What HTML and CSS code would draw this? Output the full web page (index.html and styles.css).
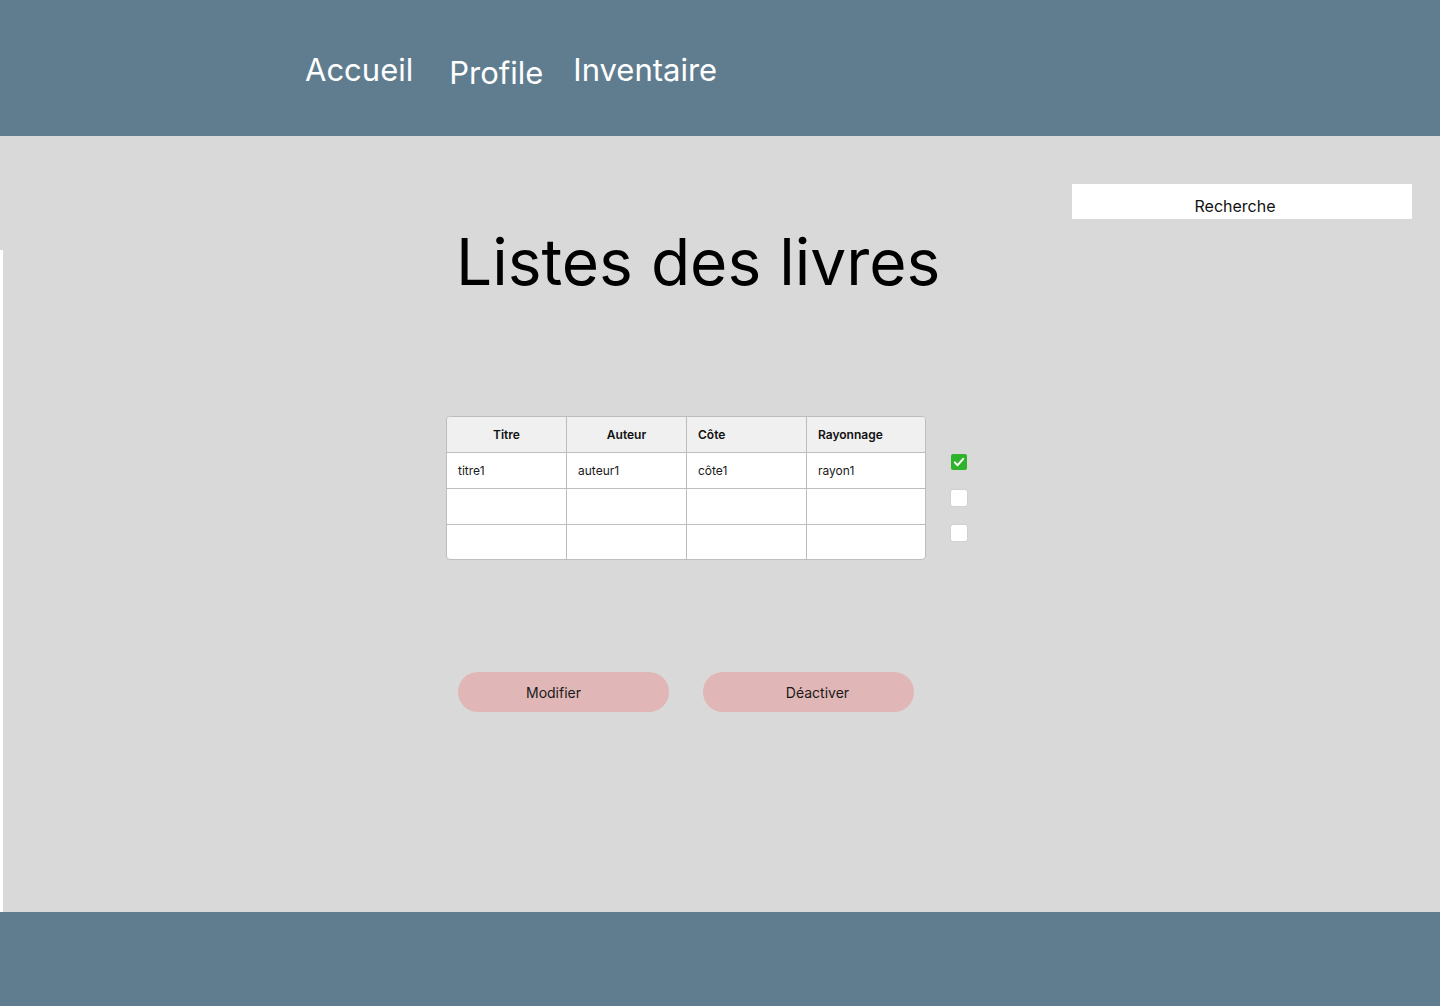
FILE: index.html
```html
<!DOCTYPE html>
<html lang="fr">
<head>
<meta charset="utf-8">
<title>Listes des livres</title>
<link rel="stylesheet" href="styles.css">
</head>
<body>
<header class="topbar">
  <nav class="nav">
    <a class="nav-link" href="#">Accueil</a>
    <a class="nav-link nav-link--low" href="#">Profile</a>
    <a class="nav-link nav-link--last" href="#">Inventaire</a>
  </nav>
</header>
<main class="main">
  <div class="edge"></div>
  <div class="search-row">
    <div class="search">Recherche</div>
  </div>
  <div class="content">
    <h1 class="title">Listes des livres</h1>
    <div class="table-row">
      <table class="books">
        <colgroup>
          <col class="col-std">
          <col class="col-std">
          <col class="col-std">
          <col class="col-last">
        </colgroup>
        <thead>
          <tr>
            <th class="center">Titre</th>
            <th class="center">Auteur</th>
            <th>Côte</th>
            <th>Rayonnage</th>
          </tr>
        </thead>
        <tbody>
          <tr><td>titre1</td><td>auteur1</td><td>côte1</td><td>rayon1</td></tr>
          <tr><td></td><td></td><td></td><td></td></tr>
          <tr class="last"><td></td><td></td><td></td><td></td></tr>
        </tbody>
      </table>
      <div class="checks">
        <span class="check check--on">
          <svg viewBox="0 0 16 16" width="16" height="16"><path d="M3.8 8.4 L6.6 11.2 L12.2 4.8" fill="none" stroke="#fff" stroke-width="2" stroke-linecap="round" stroke-linejoin="round"/></svg>
        </span>
        <span class="check"></span>
        <span class="check"></span>
      </div>
    </div>
    <div class="actions">
      <button class="btn btn--left">Modifier</button>
      <button class="btn btn--right">Déactiver</button>
    </div>
  </div>
</main>
<footer class="footer"></footer>
</body>
</html>
```

FILE: styles.css
```css
* { box-sizing: border-box; }
html, body { margin: 0; padding: 0; }
body {
  font-family: Inter, "Noto Sans", "Liberation Sans", sans-serif;
  background: #d9d9d9;
  color: #000;
}
.topbar {
  height: 136px;
  background: #607d8f;
  padding: 51px 0 0 305px;
}
.nav {
  display: flex;
  align-items: flex-start;
}
.nav-link {
  color: #fff;
  text-decoration: none;
  font-size: 31px;
  line-height: 38px;
  margin-right: 36px;
}
.nav-link--low { padding-top: 3px; margin-right: 30px; }
.nav-link--last { margin-right: 0; }

.main {
  position: relative;
  height: 776px;
  background: #d9d9d9;
}
.edge {
  position: absolute;
  left: 0;
  top: 114px;
  bottom: 0;
  width: 3px;
  background: #fff;
}
.search-row {
  display: flex;
  justify-content: flex-end;
  padding: 48px 28px 0 0;
}
.search {
  width: 340px;
  height: 35px;
  background: #fff;
  font-size: 16px;
  line-height: 19px;
  padding: 13px 14px 3px 0;
  text-align: center;
  color: #111;
}
.content {
  padding-left: 446px;
}
.title {
  margin: 4px 0 0 0;
  padding-left: 10px;
  font-size: 64px;
  font-weight: 400;
  line-height: 77px;
  letter-spacing: 0;
}
.table-row {
  display: flex;
  align-items: flex-start;
  margin-top: 116px;
}
.books {
  width: 480px;
  table-layout: fixed;
  border-collapse: separate;
  border-spacing: 0;
  border: 1px solid #bdbdbd;
  border-radius: 4px;
  background: #fff;
  overflow: hidden;
  font-size: 12px;
  color: #1a1a1a;
}
.col-std { width: 120px; }
.col-last { width: 118px; }
.books th, .books td {
  height: 36px;
  padding: 0 0 0 11px;
  border-right: 1px solid #bdbdbd;
  border-bottom: 1px solid #bdbdbd;
  text-align: left;
  vertical-align: middle;
}
.books th:last-child, .books td:last-child { border-right: 0; }
.books tr.last td { border-bottom: 0; height: 34px; }
.books th {
  background: #f0f0f0;
  font-weight: 600;
  color: #111;
  height: 36px;
}
.books th.center { text-align: center; padding: 0; }
.books thead th:first-child { border-top-left-radius: 3px; }
.books thead th:last-child { border-top-right-radius: 3px; }

.checks {
  display: flex;
  flex-direction: column;
  gap: 19.5px;
  margin-left: 25px;
  padding-top: 38px;
}
.check {
  display: block;
  width: 16px;
  height: 16px;
  border-radius: 2px;
  background: #fff;
  box-shadow: 0 0 1.5px rgba(0,0,0,0.18);
}
.check--on {
  background: #2fb32b;
  box-shadow: none;
}
.check svg { display: block; }

.actions {
  display: flex;
  gap: 34px;
  margin-top: 112px;
  padding-left: 12px;
}
.btn {
  width: 211px;
  height: 40px;
  border: 0;
  border-radius: 20px;
  background: #e1b6b6;
  font-family: Inter, "Noto Sans", "Liberation Sans", sans-serif;
  font-size: 14px;
  color: #1a1a1a;
  cursor: pointer;
}
.btn--left { padding: 0 20px 0 0; }
.btn--right { padding: 0 0 0 18px; }

.footer {
  height: 94px;
  background: #607d8f;
}
```
